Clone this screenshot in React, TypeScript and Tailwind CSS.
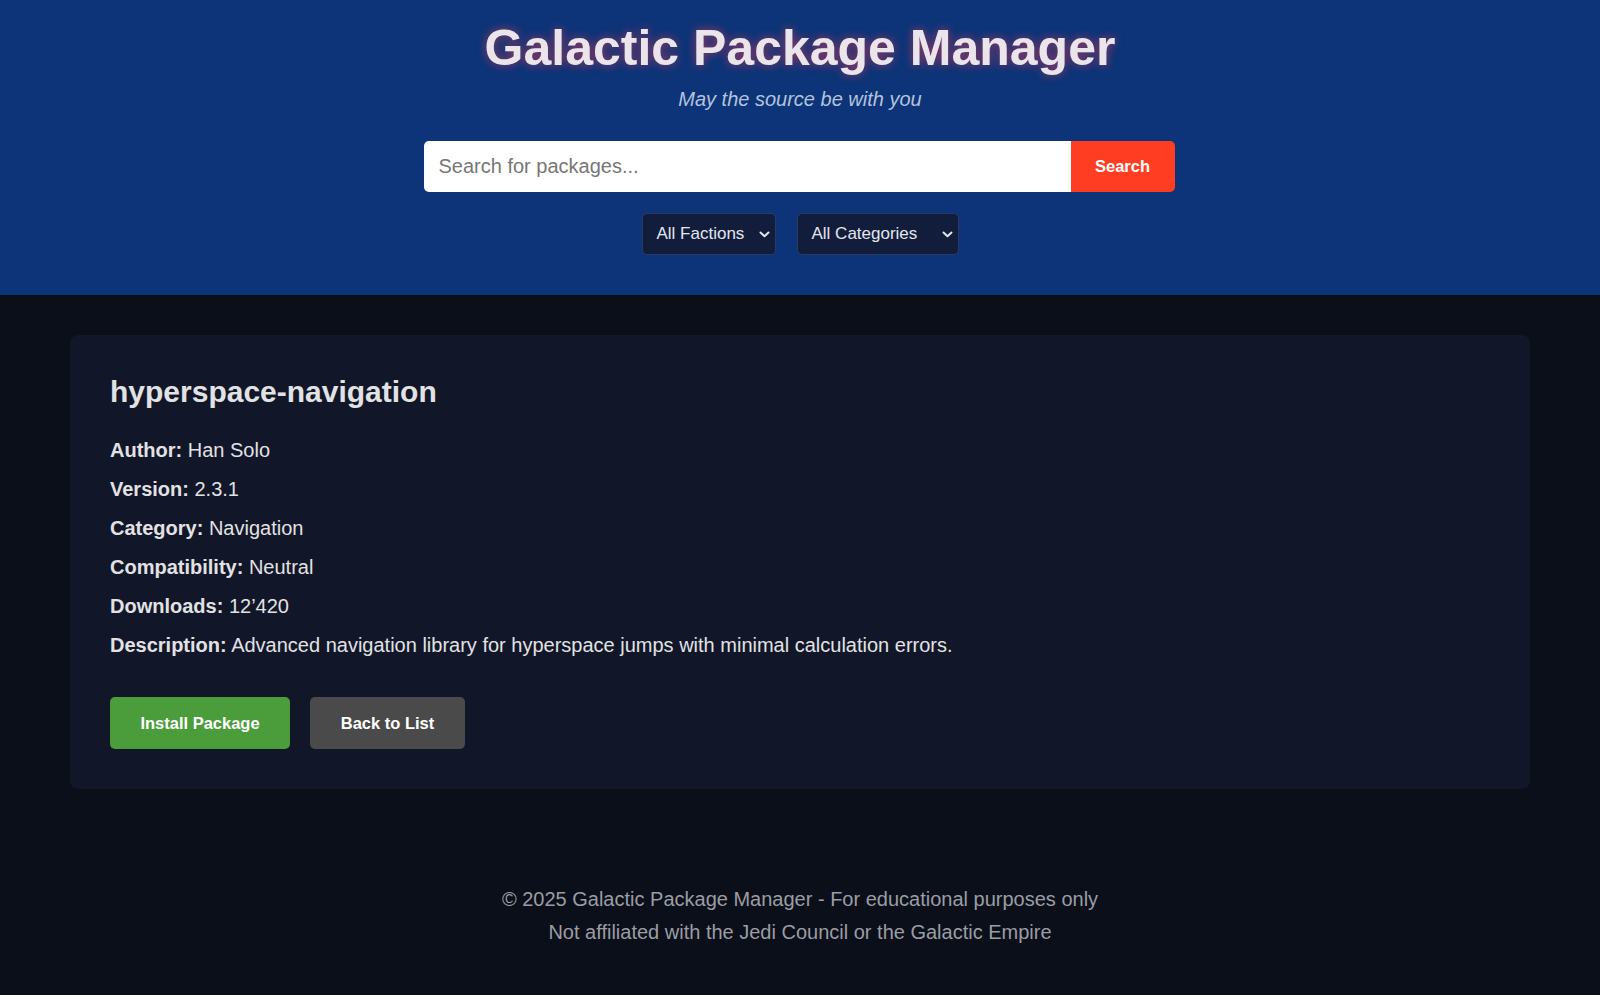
import React from "react";

const font = { fontFamily: '"Liberation Sans", Arial, sans-serif' };

function Chevron() {
  return (
    <svg width="11" height="7" viewBox="0 0 11 7" fill="none" className="shrink-0">
      <path d="M1.5 1.5L5.5 5.2L9.5 1.5" stroke="#e5e7eb" strokeWidth="2" strokeLinecap="round" strokeLinejoin="round" />
    </svg>
  );
}

function FakeSelect({ label, width }: { label: string; width: string }) {
  return (
    <div
      className={`flex h-[42px] items-center justify-between rounded-[5px] border border-[#2a3a62] bg-[#111d3a] pl-[14px] pr-[5px] text-[17px] text-[#e3e6ee] ${width}`}
    >
      <span>{label}</span>
      <Chevron />
    </div>
  );
}

const details: [string, string][] = [
  ["Author:", "Han Solo"],
  ["Version:", "2.3.1"],
  ["Category:", "Navigation"],
  ["Compatibility:", "Neutral"],
  ["Downloads:", "12\u2019420"],
  ["Description:", "Advanced navigation library for hyperspace jumps with minimal calculation errors."],
];

export default function App() {
  return (
    <div className="min-h-screen bg-[#0b0f19]" style={font}>
      {/* header */}
      <header className="bg-[#0d3478] pb-[40px] pt-[20px] text-center">
        <h1 className="text-[50px] font-bold leading-[57px] text-[#e9e5ea] [text-shadow:0_0_10px_rgba(255,60,80,0.6)]">
          Galactic Package Manager
        </h1>
        <p className="mt-[11px] text-[20px] italic leading-[23px] text-[#b3c3dd]">May the source be with you</p>

        <div className="mx-auto mt-[30px] flex h-[51px] w-[751px] -translate-x-px">
          <input
            type="text"
            placeholder="Search for packages..."
            className="h-full flex-1 rounded-l-[5px] bg-white px-[15px] text-[20px] text-[#222] outline-none placeholder:text-[#777]"
          />
          <button type="button" className="h-full w-[104px] rounded-r-[5px] bg-[#ff3d22] text-[16.5px] font-bold text-white">
            Search
          </button>
        </div>

        <div className="mt-[21px] flex justify-center gap-[21px]">
          <FakeSelect label="All Factions" width="w-[134px]" />
          <FakeSelect label="All Categories" width="w-[162px]" />
        </div>
      </header>

      {/* package detail */}
      <main className="px-[70px] pt-[40px]">
        <div className="rounded-[8px] bg-[#111628] p-[40px] text-[#e2e2e4]">
          <h2 className="mb-[30px] text-[30px] font-bold leading-[34px]">hyperspace-navigation</h2>
          <div className="flex flex-col gap-[16px]">
            {details.map(([k, v]) => (
              <p key={k} className="text-[20px] leading-[23px]">
                <span className="font-bold">{k}</span> {v}
              </p>
            ))}
          </div>
          <div className="mt-[40px] flex gap-[20px]">
            <button type="button" className="h-[52px] w-[180px] rounded-[5px] bg-[#4a9d3a] text-[16.5px] font-bold text-white">
              Install Package
            </button>
            <button type="button" className="h-[52px] w-[155px] rounded-[5px] bg-[#4a4a4a] text-[16.5px] font-bold text-white">
              Back to List
            </button>
          </div>
        </div>
      </main>

      {/* footer */}
      <footer className="flex flex-col gap-[10px] pb-[50px] pt-[99px] text-center text-[20px] leading-[23px] text-[#9b9da4]">
        <p>© 2025 Galactic Package Manager - For educational purposes only</p>
        <p>Not affiliated with the Jedi Council or the Galactic Empire</p>
      </footer>
    </div>
  );
}
